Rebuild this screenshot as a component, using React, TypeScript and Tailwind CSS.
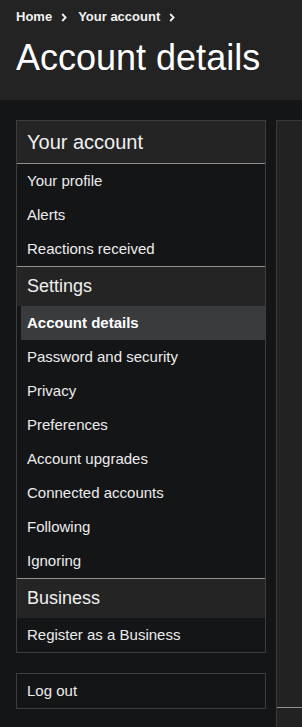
import React from "react";

const Chevron = () => (
    <svg width="6" height="9" viewBox="0 0 6 9" className="mx-[9px] shrink-0">
        <path d="M1.2 1 L4.6 4.5 L1.2 8" fill="none" stroke="#f2f2f2" strokeWidth="1.8" />
    </svg>
);

const sections = [
    {
        title: "Settings",
        items: [
            "Account details",
            "Password and security",
            "Privacy",
            "Preferences",
            "Account upgrades",
            "Connected accounts",
            "Following",
            "Ignoring",
        ],
    },
    { title: "Business", items: ["Register as a Business"] },
];

const NavItem = ({ label, active }: { label: string; active?: boolean }) => (
    <div
        className={`h-[34px] flex items-center text-[15px] ${active
            ? "ml-1 pl-[6px] bg-[#3a3b3d] font-bold text-white"
            : "pl-[10px] text-[#ececec]"
            }`}
    >
        {label}
    </div>
);

export default function App() {
    return (
        <div
            className="min-h-screen bg-[#141517] overflow-hidden"
            style={{ fontFamily: '"Liberation Sans", Arial, sans-serif' }}
        >
            {/* page header */}
            <div className="h-[100px] bg-[#232323] px-4 pt-2">
                <div className="flex items-center h-[18px] text-[13px] font-bold text-[#f2f2f2]">
                    <span>Home</span>
                    <Chevron />
                    <span className="ml-[2px]">Your account</span>
                    <Chevron />
                </div>
                <h1 className="mt-[10px] text-[36px] leading-[1.2] text-white">Account details</h1>
            </div>

            <div className="flex pl-4 pt-5">
                <div className="w-[250px] shrink-0">
                    <div className="border border-[#3d3d3d]">
                        <div className="h-[43px] bg-[#242424] border-b border-[#8f8f8f] px-[10px] flex items-center text-[20px] text-[#f0f0f0]">
                            Your account
                        </div>
                        <NavItem label="Your profile" />
                        <NavItem label="Alerts" />
                        <NavItem label="Reactions received" />
                        {sections.map((s) => (
                            <div key={s.title} className="border-t border-[#8f8f8f]">
                                <div className="h-[39px] bg-[#242424] px-[10px] flex items-center text-[18px] text-[#f0f0f0]">
                                    {s.title}
                                </div>
                                {s.items.map((it) => (
                                    <NavItem key={it} label={it} active={it === "Account details"} />
                                ))}
                            </div>
                        ))}
                    </div>

                    <div className="mt-5 border border-[#3d3d3d]">
                        <NavItem label="Log out" />
                    </div>
                </div>

                <div className="ml-[10px] flex-1 min-w-0 bg-[#222222] border-l border-t border-[#383838]">
                    <div className="h-[586px]" />
                    <div className="h-[40px] border-t border-[#8f8f8f]" />
                </div>
            </div>
        </div>
    );
}
